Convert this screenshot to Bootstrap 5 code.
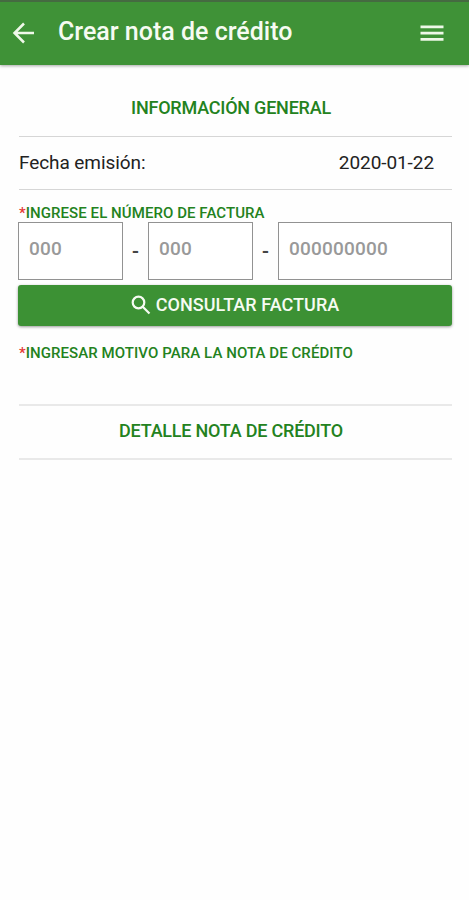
<!DOCTYPE html>
<html lang="es">
<head>
<meta charset="utf-8">
<meta name="viewport" content="width=device-width, initial-scale=1">
<title>Crear nota de crédito</title>
<link href="https://cdn.jsdelivr.net/npm/bootstrap@5.3.0/dist/css/bootstrap.min.css" rel="stylesheet">
<style>
body{font-family:Roboto,"Liberation Sans",sans-serif;color:#222;background:#fefefe;line-height:1}
.topbar{height:65px;background:#3f9237;border-top:2px solid #456a41;box-shadow:0 1px 3px rgba(0,0,0,.35);padding:0 25px 0 11px}
.topbar h1{font-size:25px;font-weight:500;line-height:28px;margin:-4px 0 0 22px;color:#f6fbf2}
.topbar svg{margin-top:-2px}
.page{padding:0 17px 0 18px}
.green{color:#238220;font-weight:500}
.line{border-bottom:1px solid #d6d6d6;margin-left:1px}
.line-soft{border-bottom:2px solid #e9e9e9}
.heading{font-size:18px;font-weight:500;margin:0;letter-spacing:-.22px}
.h-info{height:72px;padding:15px 9px 0 0}
.h-date{height:53px;font-size:19px;letter-spacing:-.08px;padding:0 18px 2px 0}
.h-detail{height:54px;padding:0 9px 2px 0}
.lbl{font-size:15px;line-height:18px;display:block;letter-spacing:.07px}
.l1{margin:14px 0 0 1px}
.star{color:#e53935}
.form-control.num{height:58px;border:1px solid #929292;border-radius:0;padding:0 10px 5px;font-size:19px;font-weight:500;letter-spacing:.2px;background:#fff}
.num::placeholder{color:#999;opacity:1}
.short{flex:0 0 105px;width:105px}
.dash{flex:0 0 25px;font-size:19px;font-weight:700;color:#444}
.btn.consult{height:41px;margin:5px 0 0;background:#3c9134;color:#f6fbf2;border:0;border-radius:3px;font-size:18px;font-weight:500;line-height:1;padding-bottom:8px;letter-spacing:.05px;box-shadow:0 1px 3px rgba(0,0,0,.4)}
.consult svg{margin-right:5px}
.reason{height:62px;margin-top:18px}
</style>
</head>
<body>
<header class="topbar d-flex align-items-center">
  <svg width="25" height="26" viewBox="0 0 25 26" fill="none" stroke="#f0f9ea" stroke-width="2.5"><path d="M23 13H4M13 3.5 3.5 13l9.500 9.500"/></svg>
  <h1>Crear nota de crédito</h1>
  <svg class="ms-auto" width="24" height="18" viewBox="0 0 24 18" fill="#eef8e8"><path d="M.5 1.500h23v2.700h-23zM.5 7.700h23v2.700h-23zM.5 14h23v2.700h-23z"/></svg>
</header>
<main class="page">
  <section class="h-info line d-flex align-items-center justify-content-center"><h2 class="heading green">INFORMACIÓN GENERAL</h2></section>
  <div class="h-date line d-flex align-items-center justify-content-between"><span>Fecha emisión:</span><span>2020-01-22</span></div>
  <form>
    <label class="lbl green l1" for="n1"><span class="star">*</span>INGRESE EL NÚMERO DE FACTURA</label>
    <div class="d-flex align-items-center">
      <input class="form-control num short" id="n1" placeholder="000">
      <span class="dash text-center">-</span>
      <input class="form-control num short" placeholder="000">
      <span class="dash text-center">-</span>
      <input class="form-control num" placeholder="000000000">
    </div>
    <button type="button" class="btn consult w-100 d-flex align-items-center justify-content-center">
      <svg width="20" height="20" viewBox="0 0 20 20" fill="none" stroke="currentColor" stroke-width="2.200"><circle cx="7.500" cy="7.500" r="5.800"/><path d="m11.500 11.500 7 7"/></svg>
      <span>CONSULTAR FACTURA</span>
    </button>
    <div class="reason line line-soft"><span class="lbl green"><span class="star">*</span>INGRESAR MOTIVO PARA LA NOTA DE CRÉDITO</span></div>
  </form>
  <section class="h-detail line line-soft d-flex align-items-center justify-content-center"><h2 class="heading green">DETALLE NOTA DE CRÉDITO</h2></section>
</main>
<script src="https://cdn.jsdelivr.net/npm/bootstrap@5.3.0/dist/js/bootstrap.bundle.min.js"></script>
</body>
</html>
